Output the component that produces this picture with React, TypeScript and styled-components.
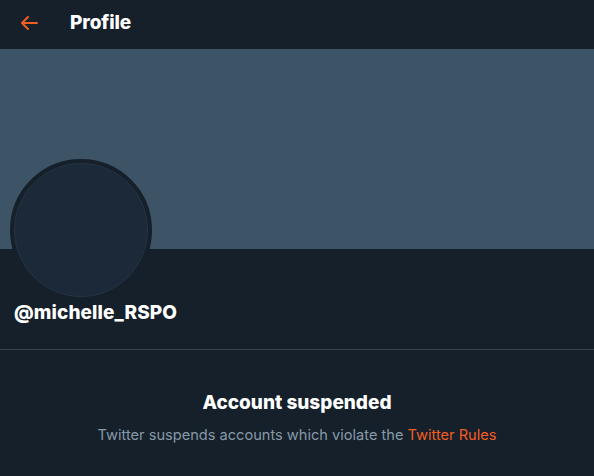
import React from "react";
import styled, { createGlobalStyle } from "styled-components";

const Global = createGlobalStyle`
  html, body { margin: 0; padding: 0; background: #15202b; }
  body { font-family: Inter, "Noto Sans", "Liberation Sans", sans-serif; -webkit-font-smoothing: antialiased; }
  * { box-sizing: border-box; }
`;

const Page = styled.div`
  width: 594px;
  height: 476px;
  background: #15202b;
  overflow: hidden;
  display: flex;
  flex-direction: column;
`;

const Header = styled.header`
  height: 49px;
  flex-shrink: 0;
  display: flex;
  align-items: center;
  padding: 0 0 4px 15px;
  gap: 27px;
`;

const BackButton = styled.button`
  width: 28px;
  height: 28px;
  display: flex;
  align-items: center;
  justify-content: center;
  background: none;
  border: none;
  padding: 0;
  color: #f45d22;
  cursor: pointer;
`;

const Title = styled.h1`
  margin: 0;
  font-size: 19px;
  font-weight: 800;
  color: #ffffff;
  letter-spacing: -0.1px;
`;

const Banner = styled.div`
  height: 200px;
  flex-shrink: 0;
  background: #3d5466;
`;

const ProfileSection = styled.section`
  padding: 0 10px 24px 10px;
  border-bottom: 1px solid #38444d;
  display: flex;
  flex-direction: column;
  align-items: flex-start;
`;

const Avatar = styled.div`
  width: 142px;
  height: 142px;
  margin-top: -90px;
  border-radius: 50%;
  border: 4px solid #15202b;
  background: #15202b;
  display: flex;
`;

const AvatarInner = styled.div`
  flex: 1;
  border-radius: 50%;
  background: #1c2938;
  border: 1px solid #243446;
`;

const Handle = styled.div`
  margin-top: 0;
  padding-left: 4px;
  line-height: 24px;
  font-size: 19px;
  font-weight: 800;
  color: #ffffff;
  letter-spacing: 0.1px;
`;

const Suspended = styled.section`
  padding-top: 41px;
  display: flex;
  flex-direction: column;
  align-items: center;
`;

const SuspendedTitle = styled.h2`
  margin: 0;
  line-height: 24px;
  font-size: 19px;
  font-weight: 800;
  color: #ffffff;
`;

const SuspendedText = styled.p`
  margin: 10px 0 0;
  line-height: 20px;
  font-size: 14.6px;
  color: #8899a6;
`;

const Link = styled.a`
  color: #f45d22;
  text-decoration: none;
`;

export default function App() {
  return (
    <Page>
      <Global />
      <Header>
        <BackButton aria-label="Back">
          <svg width="24" height="24" viewBox="0 0 24 24" fill="currentColor">
            <path d="M20 11H7.414l4.293-4.293a1 1 0 0 0-1.414-1.414l-6 6a1 1 0 0 0 0 1.414l6 6a.996.996 0 0 0 1.414 0 1 1 0 0 0 0-1.414L7.414 13H20a1 1 0 1 0 0-2z" />
          </svg>
        </BackButton>
        <Title>Profile</Title>
      </Header>
      <Banner />
      <ProfileSection>
        <Avatar>
          <AvatarInner />
        </Avatar>
        <Handle>@michelle_RSPO</Handle>
      </ProfileSection>
      <Suspended>
        <SuspendedTitle>Account suspended</SuspendedTitle>
        <SuspendedText>
          Twitter suspends accounts which violate the <Link href="#">Twitter Rules</Link>
        </SuspendedText>
      </Suspended>
    </Page>
  );
}
